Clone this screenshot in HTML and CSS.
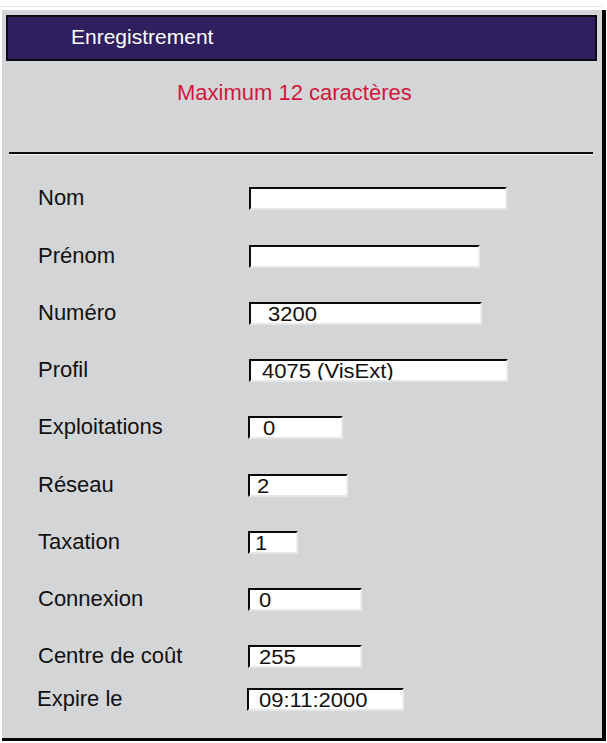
FILE: index.html
```html
<!DOCTYPE html>
<html lang="fr">
<head>
<meta charset="utf-8">
<title>Enregistrement</title>
<link rel="stylesheet" href="styles.css">
</head>
<body>
<div class="topline"></div>
<div class="panel">
  <div class="header">Enregistrement</div>
  <div class="notice">Maximum 12 caractères</div>
  <div class="separator"></div>
  <div class="form">
    <div class="row r1">
      <span class="label">Nom</span>
      <span class="field w258"></span>
    </div>
    <div class="row r2">
      <span class="label">Prénom</span>
      <span class="field w231"></span>
    </div>
    <div class="row r3">
      <span class="label">Numéro</span>
      <span class="field w233 p17"><span class="val">3200</span></span>
    </div>
    <div class="row r4">
      <span class="label">Profil</span>
      <span class="field w259 p11"><span class="val">4075 (VisExt)</span></span>
    </div>
    <div class="row r5 narrow">
      <span class="label">Exploitations</span>
      <span class="field w95 p13"><span class="val">0</span></span>
    </div>
    <div class="row r6 narrow">
      <span class="label">Réseau</span>
      <span class="field w100 p7"><span class="val">2</span></span>
    </div>
    <div class="row r7 narrow">
      <span class="label">Taxation</span>
      <span class="field w50 p5"><span class="val">1</span></span>
    </div>
    <div class="row r8 narrow">
      <span class="label">Connexion</span>
      <span class="field w114 p9"><span class="val">0</span></span>
    </div>
    <div class="row r9 narrow">
      <span class="label">Centre de coût</span>
      <span class="field w114 p9"><span class="val">255</span></span>
    </div>
    <div class="row r10 last">
      <span class="label">Expire le</span>
      <span class="field w157 p10"><span class="val">09:11:2000</span></span>
    </div>
  </div>
</div>
</body>
</html>
```

FILE: styles.css
```css
html, body {
  margin: 0;
  padding: 0;
  background: #ffffff;
}

body {
  font-family: "Liberation Sans", Arial, sans-serif;
  color: #111111;
}

.topline {
  height: 1px;
  margin: 6px 4px 0 0;
  background: #e4e4e4;
}

.panel {
  box-sizing: content-box;
  margin: 3px 0 0 2px;
  width: 600px;
  height: 728px;
  background: #d4d5d7;
  border-right: 4px solid #050505;
  border-bottom: 3px solid #050505;
  overflow: hidden;
}

.header {
  box-sizing: border-box;
  margin: 5px 5px 0 4px;
  height: 46px;
  border: 2px solid #0c0a14;
  background: #2f1f5e;
  color: #ffffff;
  font-size: 21px;
  line-height: 39px;
  padding-left: 63px;
}

.notice {
  margin-top: 19px;
  height: 26px;
  line-height: 26px;
  font-size: 22px;
  color: #d2163c;
  padding-left: 175px;
}

.separator {
  margin: 46px 9px 0 7px;
  height: 2px;
  background: #0a0a0a;
  border-bottom: 1px solid #f4f4f4;
}

.form {
  padding-top: 32px;
}

.row {
  display: flex;
  align-items: flex-start;
  padding-left: 36px;
}

.label {
  width: 211px;
  flex: none;
  font-size: 22px;
  line-height: 22px;
}

.narrow .label {
  width: 210px;
}

.last {
  padding-left: 35px;
}

.last .label {
  width: 210px;
}

.field {
  box-sizing: border-box;
  display: block;
  flex: none;
  height: 23px;
  background: #ffffff;
  border-top: 2px solid #0a0a0a;
  border-left: 2px solid #0a0a0a;
  border-right: 2px solid #ececec;
  border-bottom: 2px solid #e6e6e6;
  font-size: 20px;
  line-height: 20px;
  white-space: nowrap;
  overflow: hidden;
}

.val {
  display: inline-block;
  transform: scaleX(1.1);
  transform-origin: 0 50%;
}

.r1 { height: 58px; }
.r2, .r3, .r4 { height: 57px; }
.r5 { height: 58px; }
.r6, .r7, .r8 { height: 57px; }
.r9 { height: 43px; }

.w258 { width: 258px; }
.w231 { width: 231px; }
.w233 { width: 233px; }
.w259 { width: 259px; }
.w95 { width: 95px; }
.w100 { width: 100px; }
.w50 { width: 50px; }
.w114 { width: 114px; }
.w157 { width: 157px; }

.p5 { padding-left: 5px; }
.p7 { padding-left: 7px; }
.p9 { padding-left: 9px; }
.p10 { padding-left: 10px; }
.p11 { padding-left: 11px; }
.p13 { padding-left: 13px; }
.p17 { padding-left: 17px; }
```
